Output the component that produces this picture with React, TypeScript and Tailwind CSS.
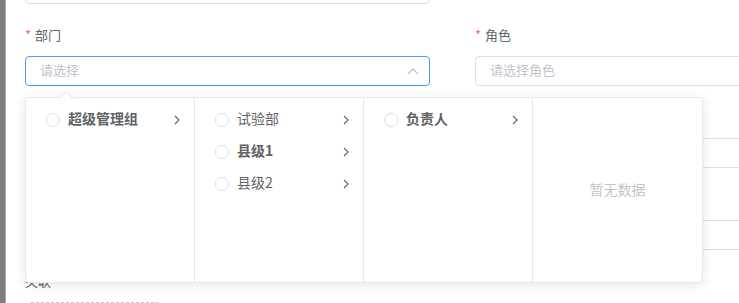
import React from 'react';

type CascaderNode = { label: string; bold?: boolean };

const columns: CascaderNode[][] = [
  [{ label: '超级管理组', bold: true }],
  [{ label: '试验部' }, { label: '县级1', bold: true }, { label: '县级2' }],
  [{ label: '负责人', bold: true }],
  [],
];

const ArrowRight = () => (
  <svg width="6" height="10" viewBox="0 0 6 10" fill="none" className="shrink-0">
    <path d="M1 1 L5 5 L1 9" stroke="#606266" strokeWidth="1.1" />
  </svg>
);

const ArrowUp = () => (
  <svg width="12" height="7" viewBox="0 0 12 7" fill="none">
    <path d="M1 6 L6 1 L11 6" stroke="#c0c4cc" strokeWidth="1.3" />
  </svg>
);

// label text sits under the open dropdown for the hidden rows, so it may be left empty
const Label = ({ text, required = true }: { text?: string; required?: boolean }) => (
  <label className="mb-[10px] flex h-[20px] items-center pb-[2px] text-[13px] leading-[20px] text-[#606266]">
    {required && text && <span className="mr-[4px] text-[#f56c6c]">*</span>}
    {text}
  </label>
);

const Input = ({ placeholder, focused }: { placeholder?: string; focused?: boolean }) => (
  <div
    className={`flex h-[30px] items-center rounded-[4px] border bg-white pl-[14px] pr-[10px] text-[13px] ${
      focused ? 'border-[#409eff]' : 'border-[#dcdfe6]'
    }`}
  >
    <span className="flex-1 pb-[2px] text-[#c0c4cc]">{placeholder}</span>
    {focused && <ArrowUp />}
  </div>
);

const CascaderPanel = () => (
  <div className="absolute left-0 top-[41px] z-10 flex h-[186px] rounded-[4px] border border-[#e4e7ed] bg-white shadow-[0_2px_12px_0_rgba(0,0,0,0.1)]">
    <div className="absolute left-[36px] top-[-5px] h-[9px] w-[9px] rotate-45 border-l border-t border-[#e4e7ed] bg-white" />
    {columns.map((col, i) => (
      <div
        key={i}
        className={`w-[169px] py-[6px] ${i < columns.length - 1 ? 'border-r border-[#e4e7ed]' : ''}`}
      >
        {col.length === 0 ? (
          <div className="flex h-full items-center justify-center pb-[2px] text-[14px] text-[#c0c4cc]">暂无数据</div>
        ) : (
          col.map((node) => (
            <div key={node.label} className="flex h-[32px] items-center pl-[20px] pr-[14px] text-[14px] text-[#606266]">
              <span className="mr-[8px] h-[14px] w-[14px] shrink-0 rounded-full border border-[#dcdfe6] bg-white" />
              <span className={`flex-1 pb-[3px] ${node.bold ? 'font-bold' : ''}`}>{node.label}</span>
              <ArrowRight />
            </div>
          ))
        )}
      </div>
    ))}
  </div>
);

export default function App() {
  return (
    <div className="flex h-[303px] w-[739px] overflow-hidden bg-white font-['Noto_Sans_CJK_SC',sans-serif]">
      <div className="w-[5px] shrink-0 bg-[#7d7d7d]" />
      <div className="w-[1px] shrink-0 bg-[#a9a9a9]" />
      <div className="-mt-[26px] grid shrink-0 grid-cols-[405px_405px] gap-x-[45px] pl-[19px]">
        {/* left column */}
        <div className="flex flex-col">
          <div className="mb-[22px]">
            <Input />
          </div>
          <div className="mb-[22px]">
            <Label text="部门" />
            <div className="relative">
              <Input placeholder="请选择" focused />
              <CascaderPanel />
            </div>
          </div>
          <div className="mb-[22px]">
            <Label />
            <Input />
          </div>
          <div className="mb-[22px]">
            <Label />
            <Input />
          </div>
          <div>
            <Label text="关联" required={false} />
            <div className="h-[138px] w-[138px] rounded-[6px] border border-dashed border-[#c0ccda] bg-[#fbfdff]" />
          </div>
        </div>

        {/* right column */}
        <div className="flex flex-col">
          <div className="mb-[22px] h-[30px]" />
          <div className="mb-[22px]">
            <Label text="角色" />
            <Input placeholder="请选择角色" />
          </div>
          <div className="mb-[22px]">
            <Label />
            <Input />
          </div>
          <div className="mb-[22px]">
            <Label />
            <Input />
          </div>
        </div>
      </div>
    </div>
  );
}
